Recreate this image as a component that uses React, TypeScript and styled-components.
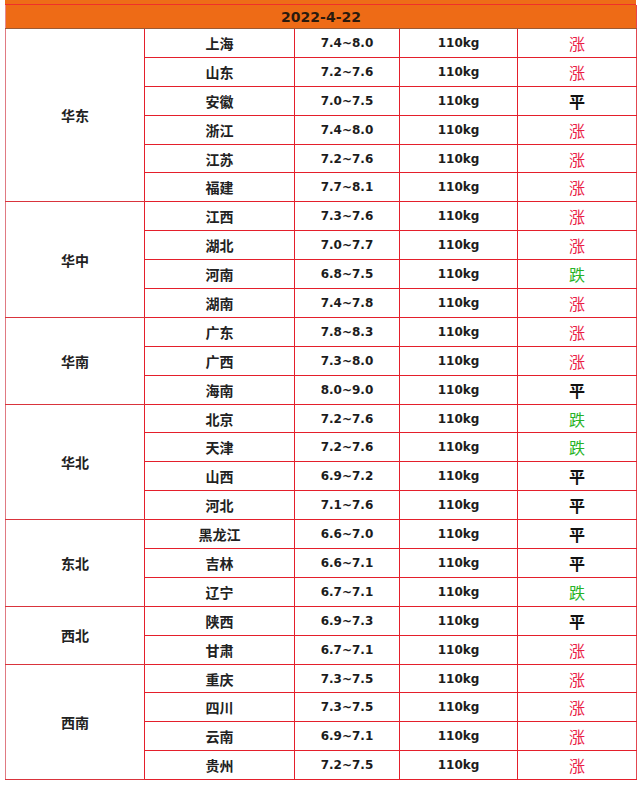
import React from "react";
import styled, { createGlobalStyle } from "styled-components";

const Global = createGlobalStyle`
  html, body { margin: 0; padding: 0; background: #fff; }
  body { font-family: "Noto Sans CJK SC", "Noto Sans", sans-serif; }
`;

const Page = styled.div`
  width: 640px;
  height: 788px;
  background: #fff;
  overflow: hidden;
`;

const TopStrip = styled.div`
  margin: 0 4px 0 5px;
  height: 4px;
  background: #ee6d17;
  border-bottom: 1px solid #f0302a;
`;

const Table = styled.table`
  margin-left: 5px;
  width: 631px;
  border-collapse: collapse;
  table-layout: fixed;
`;

const Col = styled.col<{ $w: number }>`
  width: ${(p) => p.$w}px;
`;

const HeaderCell = styled.th`
  height: 23px;
  padding: 0;
  background: #ee6b16;
  color: #2a1a0e;
  font-family: "DejaVu Sans", Verdana, sans-serif;
  font-size: 14px;
  font-weight: bold;
  text-align: center;
  border-left: 1px solid #e58a8f;
  border-right: 1px solid #e8454a;
  border-bottom: 1px solid #9a5a34;
`;

const Cell = styled.td`
  height: 27.9px;
  padding: 0;
  text-align: center;
  vertical-align: middle;
  border: 1px solid #e41f2b;
  color: #222;
`;

const RegionCell = styled(Cell)`
  font-size: 14px;
  font-weight: bold;
  border-left: 1px solid #e07a82;
  border-bottom-color: #d9343c;
`;

const CityCell = styled(Cell)`
  font-size: 14px;
  font-weight: bold;
`;

const NumCell = styled(Cell)`
  font-family: "DejaVu Sans", Verdana, sans-serif;
  font-size: 12px;
  font-weight: bold;
  color: #1c1c1c;
`;

const TrendCell = styled(Cell)<{ $trend: string }>`
  font-size: 16px;
  font-weight: ${(p) => (p.$trend === "平" ? "bold" : "normal")};
  color: ${(p) =>
    p.$trend === "涨" ? "#ea2045" : p.$trend === "跌" ? "#27b327" : "#111"};
  border-right: 1px solid #e24650;
`;

type Row = [string, string, string];
const groups: { region: string; rows: Row[] }[] = [
  {
    region: "华东",
    rows: [
      ["上海", "7.4~8.0", "涨"],
      ["山东", "7.2~7.6", "涨"],
      ["安徽", "7.0~7.5", "平"],
      ["浙江", "7.4~8.0", "涨"],
      ["江苏", "7.2~7.6", "涨"],
      ["福建", "7.7~8.1", "涨"],
    ],
  },
  {
    region: "华中",
    rows: [
      ["江西", "7.3~7.6", "涨"],
      ["湖北", "7.0~7.7", "涨"],
      ["河南", "6.8~7.5", "跌"],
      ["湖南", "7.4~7.8", "涨"],
    ],
  },
  {
    region: "华南",
    rows: [
      ["广东", "7.8~8.3", "涨"],
      ["广西", "7.3~8.0", "涨"],
      ["海南", "8.0~9.0", "平"],
    ],
  },
  {
    region: "华北",
    rows: [
      ["北京", "7.2~7.6", "跌"],
      ["天津", "7.2~7.6", "跌"],
      ["山西", "6.9~7.2", "平"],
      ["河北", "7.1~7.6", "平"],
    ],
  },
  {
    region: "东北",
    rows: [
      ["黑龙江", "6.6~7.0", "平"],
      ["吉林", "6.6~7.1", "平"],
      ["辽宁", "6.7~7.1", "跌"],
    ],
  },
  {
    region: "西北",
    rows: [
      ["陕西", "6.9~7.3", "平"],
      ["甘肃", "6.7~7.1", "涨"],
    ],
  },
  {
    region: "西南",
    rows: [
      ["重庆", "7.3~7.5", "涨"],
      ["四川", "7.3~7.5", "涨"],
      ["云南", "6.9~7.1", "涨"],
      ["贵州", "7.2~7.5", "涨"],
    ],
  },
];

const colWidths = [139, 150, 105, 118, 119];

export default function App() {
  return (
    <Page>
      <Global />
      <TopStrip />
      <Table>
        <colgroup>
          {colWidths.map((w, i) => (
            <Col key={i} $w={w} />
          ))}
        </colgroup>
        <thead>
          <tr>
            <HeaderCell colSpan={5}>2022-4-22</HeaderCell>
          </tr>
        </thead>
        <tbody>
          {groups.map((g) =>
            g.rows.map((r, i) => (
              <tr key={g.region + r[0]}>
                {i === 0 && (
                  <RegionCell rowSpan={g.rows.length}>{g.region}</RegionCell>
                )}
                <CityCell>{r[0]}</CityCell>
                <NumCell>{r[1]}</NumCell>
                <NumCell>110kg</NumCell>
                <TrendCell $trend={r[2]}>{r[2]}</TrendCell>
              </tr>
            ))
          )}
        </tbody>
      </Table>
    </Page>
  );
}
